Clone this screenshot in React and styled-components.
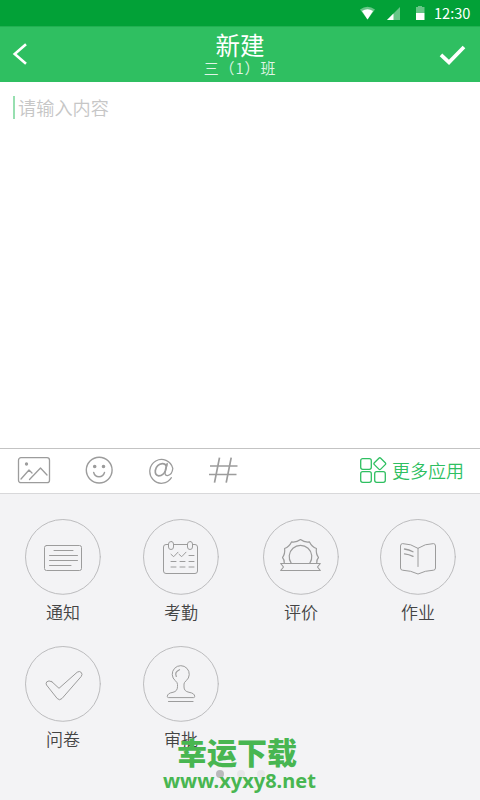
import React from "react";
import styled, { createGlobalStyle } from "styled-components";

const cjk = '"Noto Sans CJK SC", sans-serif';

const GlobalStyle = createGlobalStyle`
  * { box-sizing: border-box; }
  body { margin: 0; background: #f3f3f5; font-family: ${cjk}; font-weight: 350; }
  svg { display: block; }
`;

const Screen = styled.div`
  position: relative;
  display: flex;
  flex-direction: column;
  width: 480px;
  height: 800px;
  overflow: hidden;
  background: #f3f3f5;
`;

const StatusBar = styled.div`
  display: flex;
  flex: none;
  align-items: center;
  justify-content: flex-end;
  height: 26px;
  padding-right: 9px;
  background: #02a137;
`;

const Clock = styled.span`
  width: 37px;
  margin-left: 8px;
  color: #fff;
  font: 400 14.6px/26px "Noto Sans CJK SC", sans-serif;
  white-space: nowrap;
`;

const Header = styled.header`
  display: flex;
  flex: none;
  align-items: center;
  justify-content: space-between;
  height: 56px;
  padding: 0 14px 2px 12px;
  border-top: 1px solid #22b052;
  background: #2fbf61;
`;

const HeaderSide = styled.div`
  display: flex;
  width: 28px;
  justify-content: ${(p) => (p.$end ? "flex-end" : "flex-start")};
`;

const Heading = styled.div`
  display: flex;
  flex-direction: column;
  align-items: center;
  padding-left: 2px;
  color: #fff;
`;

const Title = styled.h1`
  margin: -1px 0 0;
  font-size: 24.5px;
  font-weight: 400;
  line-height: 30px;
`;

const Subtitle = styled.span`
  margin-top: -1px;
  font-size: 15px;
  line-height: 18px;
  letter-spacing: 0.9px;
  opacity: 0.85;
`;

const Editor = styled.main`
  display: flex;
  flex: none;
  align-items: flex-start;
  height: 366px;
  padding: 14px 13px;
  background: #fff;
`;

const Caret = styled.span`
  width: 2px;
  height: 23px;
  margin-right: 3px;
  background: #97dfb0;
`;

const Placeholder = styled.span`
  color: #c6c6c6;
  font-size: 18.2px;
  line-height: 22px;
`;

const Toolbar = styled.div`
  display: flex;
  flex: none;
  align-items: center;
  justify-content: space-between;
  height: 46px;
  padding: 0 16px 2px 17px;
  border-top: 1px solid #c3c3c3;
  border-bottom: 1px solid #d8d8da;
  background: #fff;
`;

const Tools = styled.div`
  display: grid;
  grid-template-columns: 68px 63px 60px 30px;
  align-items: center;
`;

const More = styled.div`
  display: flex;
  align-items: center;
  gap: 5px;
  color: #2fbf61;
  font-size: 18px;
  line-height: 28px;
`;

const Apps = styled.section`
  display: grid;
  grid-template-columns: 118px 120px 117px 76px;
  grid-auto-rows: 127px;
  padding: 25px 0 0 25px;
`;

const AppItem = styled.div`
  display: flex;
  flex-direction: column;
  align-items: center;
  width: 76px;
`;

const AppLabel = styled.span`
  color: #444;
  font-size: 17px;
  line-height: 20px;
  margin-top: 7px;
`;

const Dots = styled.div`
  position: absolute;
  left: 216px;
  top: 770px;
  display: flex;
  gap: 12.5px;
`;

const Dot = styled.span`
  width: 8px;
  height: 8px;
  border-radius: 50%;
  background: ${(p) => (p.$active ? "#b9b9bb" : "#e7e7e9")};
`;

const Watermark = styled.div`
  position: absolute;
  left: 163px;
  top: 734px;
  width: 154px;
  color: #48b651;
`;

const WatermarkName = styled.div`
  margin-left: 14px;
  font-size: 30px;
  font-weight: 900;
  line-height: 34px;
  white-space: nowrap;
`;

const WatermarkSite = styled.div`
  font: 700 20px/26px "Noto Sans", sans-serif;
  white-space: nowrap;
`;

const Line = styled.svg`
  flex: none;
  fill: none;
  stroke: ${(p) => p.$color || "#9c9c9c"};
  stroke-width: ${(p) => p.$weight || 1};
  stroke-linecap: ${(p) => p.$cap || "round"};
  stroke-linejoin: ${(p) => p.$join || "round"};
`;

const StatusIcons = () => (
  <svg width="66" height="26" viewBox="0 0 66 26" fill="#fff">
    <path d="M0 9.5Q7.5 4 15 9.5L7.5 19.5Z" opacity=".4" />
    <path d="M2 11Q7.500 7.500 13 11L7.500 19.500Z" />
    <path d="M40 7V20H27Z" opacity=".4" />
    <path d="M33.500 13.500V20H27Z" />
    <path d="M56 7H58V6H62V7H64.500V13H56Z" opacity=".4" />
    <path d="M56 13H64.500V20H56Z" />
  </svg>
);

const ICONS = {
  notice: (
    <>
      <rect x="19.500" y="26.500" width="37" height="25" rx="2" />
      <path d="M29 31.500H48M24.500 36.500H52.500M24.500 41.500H52.500M24.500 46.500H46" />
    </>
  ),
  calendar: (
    <>
      <path d="M25.500 25.500H23Q20.500 25.500 20.500 28V52Q20.500 54.500 23 54.500H52Q54.500 54.500 54.500 52V28Q54.500 25.500 52 25.500H49.500M30.500 25.500H44.500" />
      <rect x="25.500" y="22.500" width="5" height="8" rx="2.500" />
      <rect x="44.500" y="22.500" width="5" height="8" rx="2.500" />
      <path d="M28 35.300L30.700 37.700L35 33.200M36 35.300L38.700 37.700L43 33.200M46 36.500H51M28 42.500H33M37 42.500H42M46 42.500H51M28 48H33M37 48H42M46 48H51" />
    </>
  ),
  award: (
    <>
      <path strokeWidth="1.200" d="M17.700 44.500H57.300L54.500 48L57.300 51.500H17.700L20.500 48Z" />
      <path strokeWidth="1.200" d="M28.300 44.300A11.300 11.300 0 1 1 46.700 44.300" />
      <path strokeWidth="1.200" d="M21.300 44.300Q21.700 41 19.500 38.500Q22.300 34.700 21.600 29.500Q26.200 27.700 28.500 22.900Q33.500 23.600 37.500 20.500Q41.500 23.600 46.500 22.900Q48.800 27.700 53.400 29.500Q52.700 34.700 55.500 38.500Q53.300 41 53.700 44.300" />
    </>
  ),
  book: (
    <>
      <path d="M38 29.300Q31 24.600 22.500 24.600Q20.500 24.700 20.500 27V49Q20.500 51 22.500 51.200Q31 51.500 38 55Q45 51.500 53.500 51.200Q55.500 51 55.500 49V27Q55.500 24.700 53.500 24.600Q45 24.600 38 29.300V47.500" />
      <path strokeWidth="1.300" d="M24.500 30Q29 30.500 33 32.700M24.500 34.800Q29 35.300 33 37.400" />
    </>
  ),
  check: (
    <path d="M26.800 35.700L34 42.300L52.200 26.200Q54.500 24.600 56.300 26.500Q57.800 28.300 56.200 30.500L37 52.500Q34.500 55 32.200 52.500L21.500 39Q20.600 37.200 21.800 35.800Q23.500 34 26.800 35.700Z" />
  ),
  stamp: (
    <>
      <path d="M34.500 38Q34.500 36.500 32.300 34.700A8.500 8.500 0 1 1 43.200 34.700Q41 36.500 41 38V41Q41 45.300 46 46.300Q51.700 47.200 51.700 50.500Q51.700 51.600 50.500 51.600H25.500Q24.300 51.600 24.300 50.500Q24.300 47.200 30 46.300Q34.500 45.300 34.500 41Z" />
      <path strokeWidth="1.200" d="M33.300 30.500Q31.200 26 36.500 23.700M25.500 55.500H50" />
    </>
  ),
};

const APPS = [
  ["notice", "通知"],
  ["calendar", "考勤"],
  ["award", "评价"],
  ["book", "作业"],
  ["check", "问卷"],
  ["stamp", "审批"],
];

const AppIcon = ({ name }) => (
  <Line width="76" height="76" viewBox="0 0 76 76">
    <circle cx="37.900" cy="37.900" r="37.400" stroke="#bcbcbe" />
    {ICONS[name]}
  </Line>
);

export default function App() {
  return (
    <Screen>
      <GlobalStyle />
      <StatusBar>
        <StatusIcons />
        <Clock>12:30</Clock>
      </StatusBar>
      <Header>
        <HeaderSide>
          <Line $color="#fff" $weight="2.6" $cap="butt" $join="miter" width="18" height="24" viewBox="0 0 18 24">
            <path d="M14 2.200L2.700 12L14 21.800" />
          </Line>
        </HeaderSide>
        <Heading>
          <Title>新建</Title>
          <Subtitle>三（1）班</Subtitle>
        </Heading>
        <HeaderSide $end>
          <Line $color="#fff" $weight="3.7" $cap="butt" $join="miter" width="28" height="24" viewBox="0 0 28 24">
            <path d="M3 12.800L11 20.400L26 5" />
          </Line>
        </HeaderSide>
      </Header>
      <Editor>
        <Caret />
        <Placeholder>请输入内容</Placeholder>
      </Editor>
      <Toolbar>
        <Tools>
          <Line $weight="1.3" width="34" height="28" viewBox="0 0 34 28">
            <rect x="1.500" y="1.700" width="31" height="25" rx="2.500" />
            <path d="M4 23L12 14L15 17M12.500 23.500L23.500 12L30 19" />
            <circle cx="9.500" cy="8" r="1" fill="#9c9c9c" />
          </Line>
          <Line $weight="1.4" width="28" height="28" viewBox="0 0 28 28">
            <circle cx="14.200" cy="14.100" r="12.900" />
            <circle cx="9.700" cy="10.500" r="1.100" fill="#9c9c9c" />
            <circle cx="18.500" cy="10.500" r="1.100" fill="#9c9c9c" />
            <path d="M8.700 16.500Q9.700 20.700 14 20.700Q18.300 20.700 19.500 16.500" />
          </Line>
          <Line $weight="1.3" width="28" height="28" viewBox="0 0 28 28">
            <path d="M23.400 21.700A11.700 11.900 0 1 1 24.800 12.300Q24.300 18.800 19.500 19.600Q16.500 19.500 17.200 16L19.200 7.500" />
            <path strokeWidth="1.700" d="M18.400 10.500Q17.300 7.600 14.400 7.700Q8.700 8.200 7.300 14.500Q6.900 19.500 10.700 19.800Q15.600 19.500 17.300 14.700L18.700 8.700" />
          </Line>
          <Line $weight="1.7" $cap="butt" width="30" height="28" viewBox="0 0 30 28">
            <path d="M11.500 1.700L6.500 26.700M23.200 1.700L18.200 26.700M2 10H29.500M1 18.500H28.500" />
          </Line>
        </Tools>
        <More>
          <Line $color="#2fbf61" $weight="1.3" width="28" height="28" viewBox="0 0 28 28">
            <rect x="1.700" y="2.700" width="10.600" height="10.600" rx="2" />
            <rect x="1.700" y="15.700" width="10.600" height="10.600" rx="2" />
            <rect x="15.700" y="15.700" width="10.600" height="10.600" rx="2" />
            <rect x="16.300" y="3.200" width="9" height="9" rx="1.300" transform="rotate(45 20.800 7.700)" />
          </Line>
          更多应用
        </More>
      </Toolbar>
      <Apps>
        {APPS.map(([icon, label]) => (
          <AppItem key={icon}>
            <AppIcon name={icon} />
            <AppLabel>{label}</AppLabel>
          </AppItem>
        ))}
      </Apps>
      <Dots>
        <Dot $active />
        <Dot />
        <Dot />
      </Dots>
      <Watermark>
        <WatermarkName>幸运下载</WatermarkName>
        <WatermarkSite>www.xyxy8.net</WatermarkSite>
      </Watermark>
    </Screen>
  );
}
